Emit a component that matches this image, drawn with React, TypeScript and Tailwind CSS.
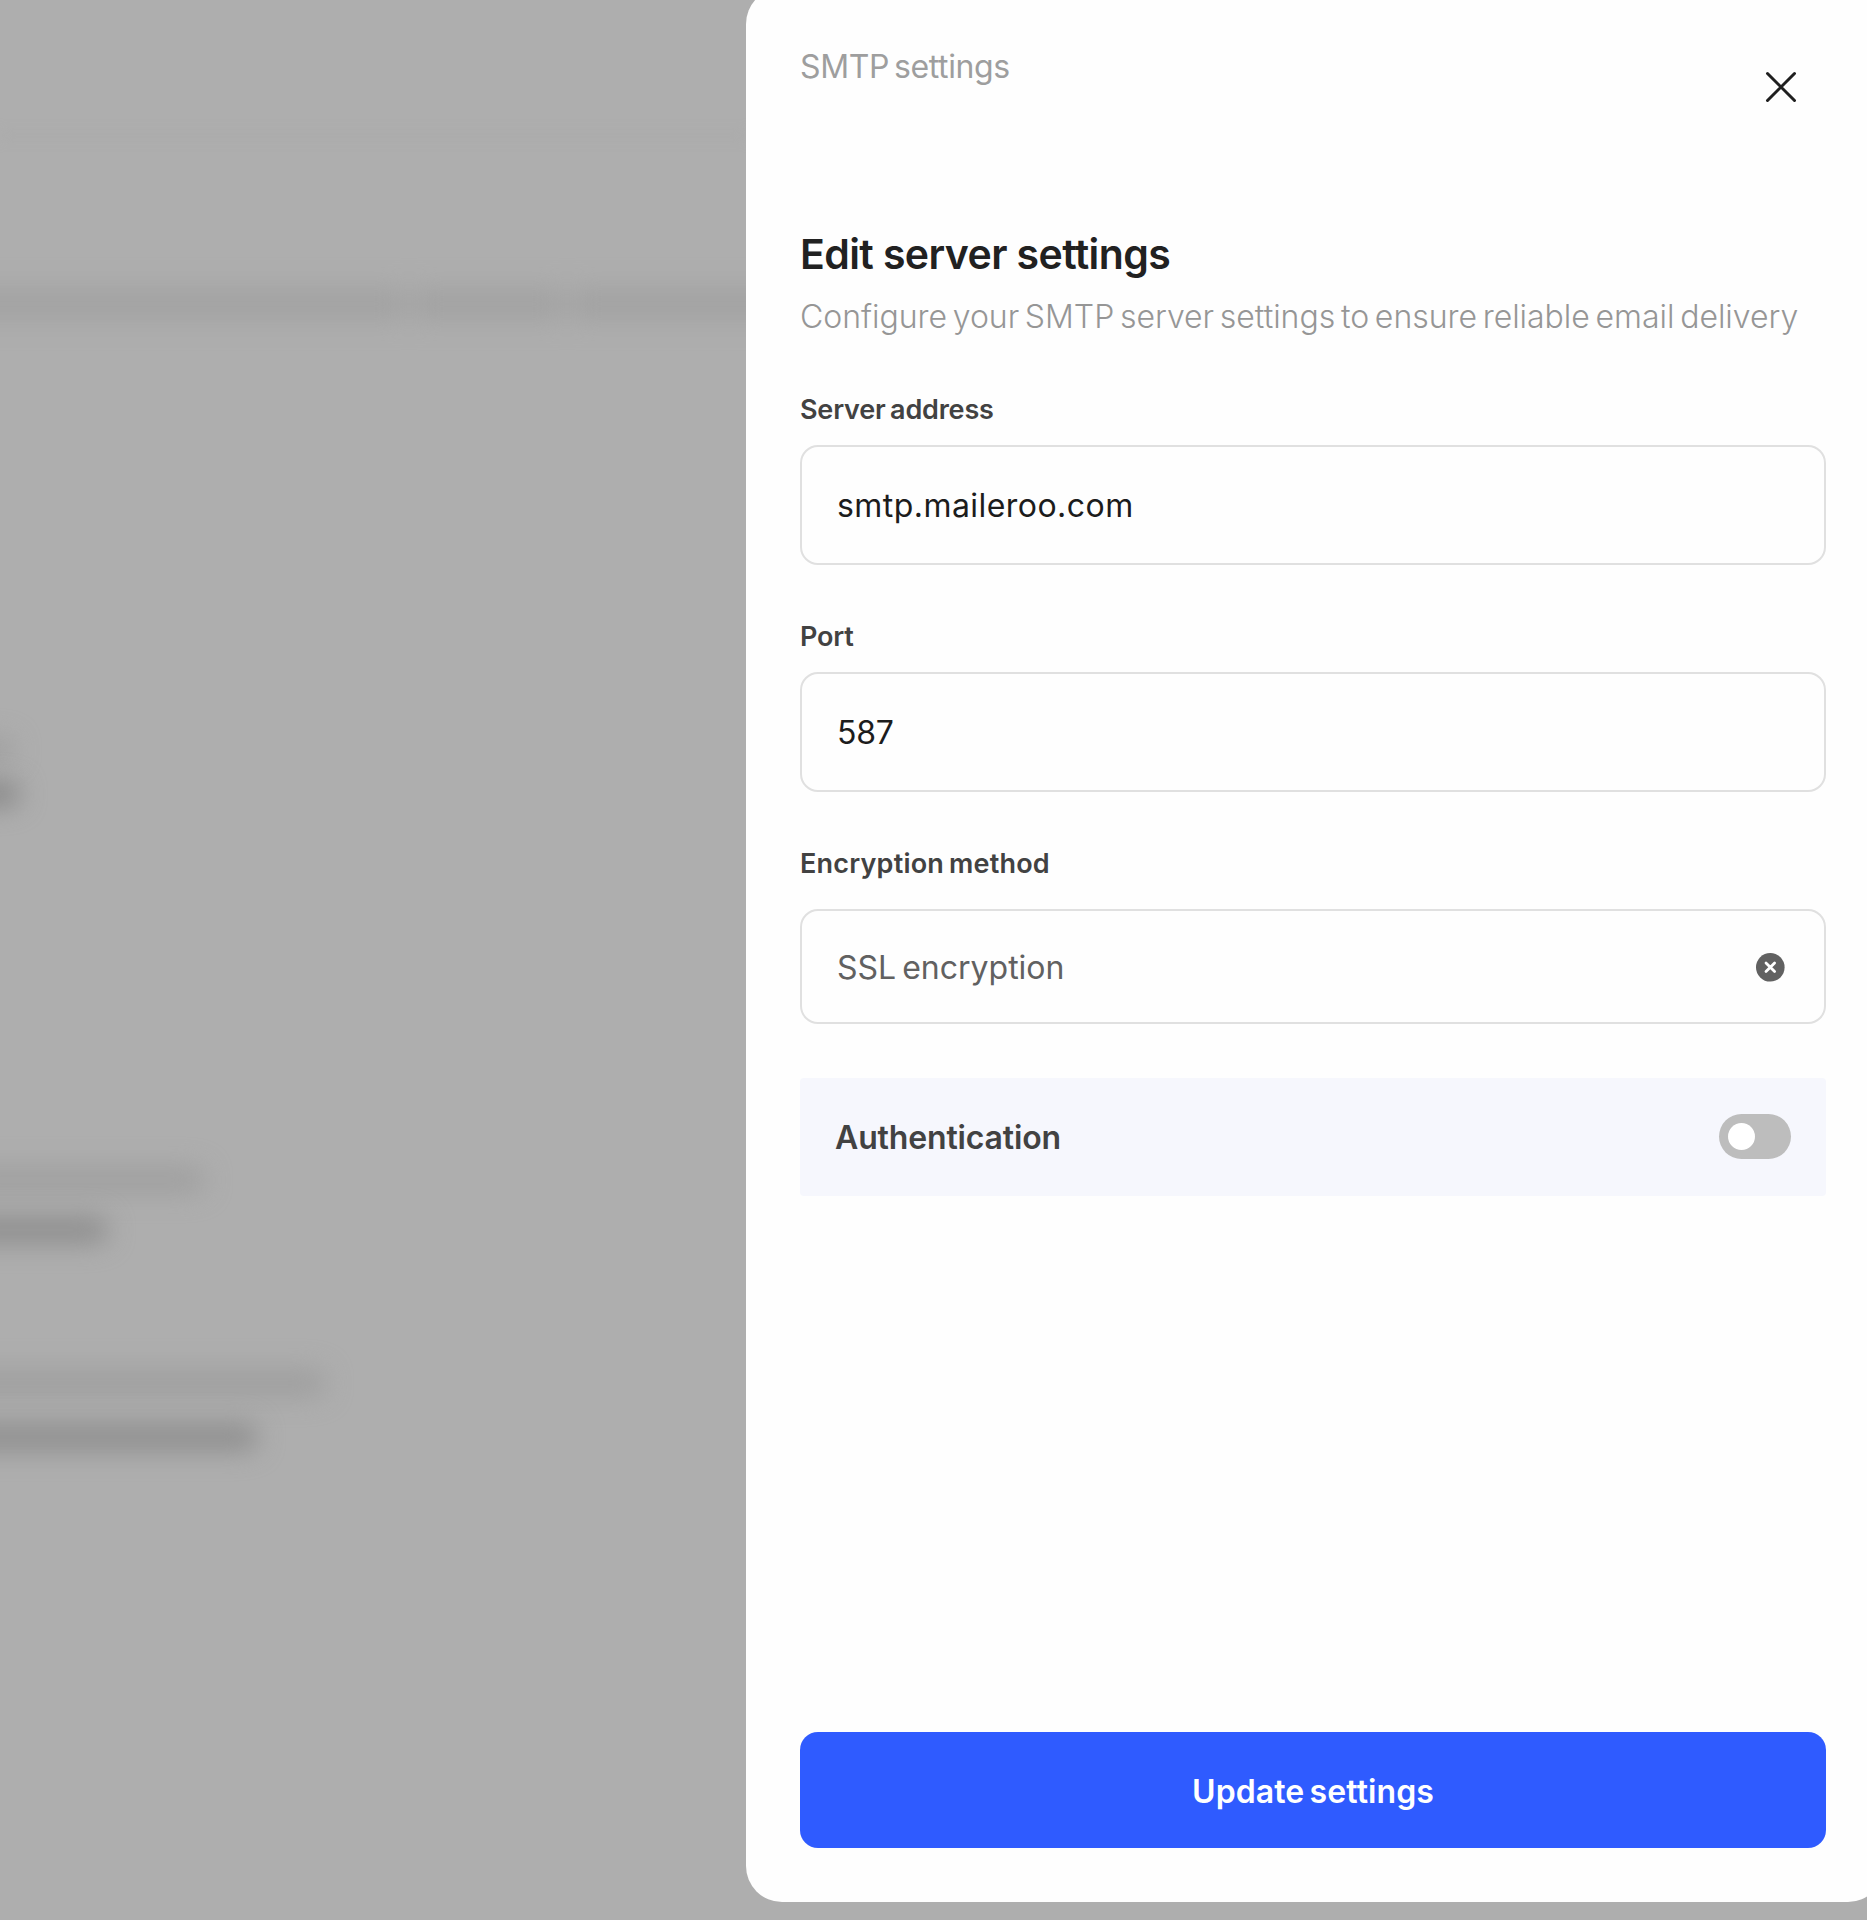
import { useState } from 'react';
import clsx from 'clsx';

interface FieldProps {
  label: string;
  value: string;
  onChange: (value: string) => void;
  inputClassName: string;
}

function Field({ label, value, onChange, inputClassName }: FieldProps) {
  return (
    <label className="block">
      <span className="block pt-px text-[27px] leading-9 font-semibold tracking-[-0.2px] [word-spacing:-2px] text-[#424242]">
        {label}
      </span>
      <input
        type="text"
        value={value}
        onChange={e => onChange(e.target.value)}
        className={clsx(
          'mt-[17px] block h-[120px] w-full rounded-[18px] border-2 border-[#e0e0e0] px-[35px] pt-px text-[32px] text-[#1c1c1c] outline-none',
          inputClassName
        )}
      />
    </label>
  );
}

function ClearIcon() {
  return (
    <svg width="29" height="29" viewBox="0 0 29 29" fill="none">
      <circle cx="14.3" cy="14.3" r="14.3" fill="#616161" />
      <path d="M10 10l8.6 8.6M18.6 10l-8.6 8.6" stroke="#fff" strokeWidth="2.8" strokeLinecap="round" />
    </svg>
  );
}

function CloseIcon() {
  return (
    <svg width="32" height="32" viewBox="0 0 32 32" fill="none">
      <path d="M2.5 2.5l27 27M29.5 2.5l-27 27" stroke="#1f1f1f" strokeWidth="3" strokeLinecap="round" />
    </svg>
  );
}

// The page behind the drawer, reduced to soft smudges by the overlay
function Backdrop() {
  return (
    <div className="w-[746px] shrink-0 overflow-hidden">
      <div className="mt-[134px] h-[3px] bg-[#a6a6a6] blur-[7px]" />
      <div className="-mr-10 -ml-10 mt-[151px] flex gap-2 blur-[13px]">
        <div className="h-8 w-[445px] bg-[#a2a2a2]" />
        <div className="h-8 w-[150px] bg-[#a2a2a2]" />
        <div className="h-8 grow bg-[#a2a2a2]" />
      </div>
      <div className="-ml-10 mt-[418px] h-6 w-[54px] rounded-full bg-[#9e9e9e] blur-[13px]" />
      <div className="-ml-10 mt-[20px] h-6 w-[60px] rounded-full bg-[#868686] blur-[13px]" />
      <div className="-ml-10 mt-[361px] h-[26px] w-[245px] rounded-full bg-[#9f9f9f] blur-[13px]" />
      <div className="-ml-10 mt-[24px] h-[26px] w-[148px] rounded-full bg-[#8d8d8d] blur-[13px]" />
      <div className="-ml-10 mt-[126px] h-[28px] w-[366px] rounded-full bg-[#9f9f9f] blur-[13px]" />
      <div className="-ml-10 mt-[26px] h-[28px] w-[298px] rounded-full bg-[#8f8f8f] blur-[13px]" />
    </div>
  );
}

export default function App() {
  const [address, setAddress] = useState('smtp.maileroo.com');
  const [port, setPort] = useState('587');
  const [auth, setAuth] = useState(false);

  return (
    <div className="flex h-[1920px] w-[1867px] overflow-hidden bg-[#aeaeae] font-['Inter',sans-serif]">
      <Backdrop />

      <div className="-mt-3 flex h-[1914px] w-[1138px] shrink-0 flex-col rounded-[36px] bg-[#fefefe] pt-[58px] pr-[58px] pb-[54px] pl-[54px]">
        <div className="flex h-[183px] items-start justify-between">
          <span className="pt-px text-[32px] leading-10 tracking-[-0.4px] [word-spacing:-3.5px] text-[#9e9e9e]">
            SMTP settings
          </span>
          <button className="mt-[25px] mr-[29px]" aria-label="Close">
            <CloseIcon />
          </button>
        </div>

        <h1 className="text-[41px] leading-[50px] font-semibold tracking-[-0.6px] text-[#212121]">
          Edit server settings
        </h1>
        <p className="mt-[18px] text-[32px] leading-10 font-light tracking-[-0.03px] [word-spacing:-3.2px] whitespace-nowrap text-[#969696]">
          Configure your SMTP server settings to ensure reliable email delivery
        </p>

        <div className="mt-[54px] flex flex-col gap-[53px]">
          <Field
            label="Server address"
            value={address}
            onChange={setAddress}
            inputClassName="tracking-[0.45px]"
          />
          <Field
            label="Port"
            value={port}
            onChange={setPort}
            inputClassName="tracking-[-0.2px]"
          />
          <div>
            <span className="block pt-px text-[27px] leading-9 font-semibold tracking-[0.2px] [word-spacing:-2px] text-[#424242]">
              Encryption method
            </span>
            <div className="mt-[27px] flex h-[115px] items-center justify-between rounded-[18px] border-2 border-[#e0e0e0] pr-[39px] pl-[35px]">
              <span className="pt-0.5 text-[32px] [word-spacing:-3px] text-[#616161]">SSL encryption</span>
              <button className="pt-0.5" aria-label="Clear">
                <ClearIcon />
              </button>
            </div>
          </div>
        </div>

        <div className="mt-[54px] flex h-[118px] items-center justify-between rounded bg-[#f6f7fd] pr-[35px] pl-[35px]">
          <span className="pt-0.5 text-[32px] font-semibold tracking-[-0.15px] text-[#424242]">
            Authentication
          </span>
          <button
            role="switch"
            aria-checked={auth}
            aria-label="Authentication"
            onClick={() => setAuth(!auth)}
            className={clsx(
              'mb-0.5 flex h-[45px] w-[72px] items-center rounded-full px-[9px]',
              auth ? 'justify-end bg-[#2f5bff]' : 'justify-start bg-[#bdbdbd]'
            )}
          >
            <span className="size-[27px] rounded-full bg-white" />
          </button>
        </div>

        <button className="mt-auto h-[116px] shrink-0 rounded-[18px] bg-[#2f5bff] pt-[3px] text-[32px] font-semibold tracking-[0.1px] [word-spacing:-3px] text-white">
          Update settings
        </button>
      </div>
    </div>
  );
}
